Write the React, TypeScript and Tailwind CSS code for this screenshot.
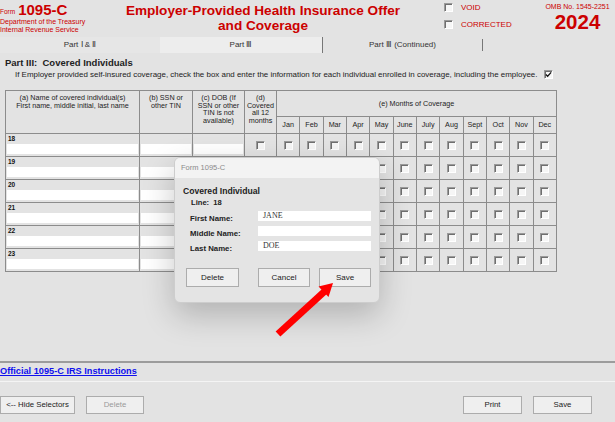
import React from "react";

const months = ["Jan", "Feb", "Mar", "Apr", "May", "June", "July", "Aug", "Sept", "Oct", "Nov", "Dec"];
const lines = [18, 19, 20, 21, 22, 23];

function Box({ checked }: { checked?: boolean }) {
  return (
    <span className="relative inline-flex items-center justify-center w-[9px] h-[9px] border border-t-[#9a9a9a] border-l-[#9a9a9a] border-b-white border-r-white bg-[#f6f6f6] shadow-[inset_1px_1px_0_#6f6f6f]">
      {checked && (
        <svg viewBox="0 0 8 8" className="w-[7px] h-[7px]">
          <path d="M1 4 L3 6 L7 1.5" fill="none" stroke="#111" strokeWidth="1.4" />
        </svg>
      )}
    </span>
  );
}

function Btn({ children, className = "", disabled }: { children: React.ReactNode; className?: string; disabled?: boolean }) {
  return (
    <button
      className={
        "h-[18px] bg-[#efefef] border border-[#acacac] text-[7.8px] leading-none flex items-center justify-center " +
        (disabled ? "text-[#9a9a9a] " : "text-[#222] ") +
        className
      }
    >
      {children}
    </button>
  );
}

export default function App() {
  const cell = "border-r border-b border-[#8c8c8c]";
  return (
    <div className="relative w-[615px] h-[422px] overflow-hidden bg-[#e3e3e3] font-['Liberation_Sans',Arial,sans-serif] text-[#222]">
      {/* Header */}
      <div className="flex h-[37px]">
        <div className="w-[110px] text-[#cc0000]">
          <div className="flex items-end h-[17px] leading-[15px]">
            <span className="text-[6.5px] leading-[10px] mr-[3px]">Form</span>
            <span className="text-[15px] font-bold">1095-C</span>
          </div>
          <div className="text-[7px] leading-[8px] pt-[1px]">Department of the Treasury</div>
          <div className="text-[7px] leading-[8px]">Internal Revenue Service</div>
        </div>
        <div className="w-[306px] pt-[3px] text-center text-[#cc0000] text-[13.6px] font-bold leading-[15px]">
          <div>Employer-Provided Health Insurance Offer</div>
          <div>and Coverage</div>
        </div>
        <div className="w-[124px] pl-[28px] pt-[3px] text-[#cc0000] text-[8px]">
          <div className="flex items-center gap-[8px] h-[9px]">
            <Box />
            <span>VOID</span>
          </div>
          <div className="flex items-center gap-[8px] h-[9px] mt-[8px]">
            <Box />
            <span>CORRECTED</span>
          </div>
        </div>
        <div className="w-[75px] text-center text-[#cc0000]">
          <div className="text-[7px] leading-[8px] pt-[3px]">OMB No. 1545-2251</div>
          <div className="text-[20.5px] font-bold leading-[22px]">2024</div>
        </div>
      </div>

      {/* Tabs */}
      <div className="flex h-[16px] text-[8px] text-[#333]">
        <div className="w-[160px] flex items-center justify-center bg-[#e6e6e6]">Part Ⅰ &amp; Ⅱ</div>
        <div className="w-[163px] flex items-center justify-center bg-[#ededed] border-r border-[#777]">Part Ⅲ</div>
        <div className="w-[160px] flex items-center justify-center border-r border-[#777] my-[2px]">Part Ⅲ (Continued)</div>
      </div>

      {/* Part III panel */}
      <div className="h-[310px] border-b-2 border-[#9c9c9c] flex flex-col">
        <div className="pl-[5px] pt-[3px] text-[9.5px] font-bold leading-[13px]">Part III:&nbsp; Covered Individuals</div>
        <div className="pl-[15px] h-[11px] flex items-center text-[7.95px]">
          <span>
            If Employer provided self-insured coverage, check the box and enter the information for each individual
            enrolled in coverage, including the employee.
          </span>
          <span className="ml-[7px] flex">
            <Box checked />
          </span>
        </div>

        <div className="ml-[5px] mt-[10px] w-[552px] border-t border-l border-[#8c8c8c] grid grid-cols-[134px_53px_52px_32px_repeat(12,minmax(0,1fr))] grid-rows-[26px_17px_repeat(6,23px)] text-[7.2px] leading-[8px]">
          <div className={cell + " row-span-2 text-center pt-[3px]"}>
            (a) Name of covered individual(s)
            <br />
            First name, middle initial, last name
          </div>
          <div className={cell + " row-span-2 text-center pt-[3px]"}>
            (b) SSN or
            <br />
            other TIN
          </div>
          <div className={cell + " row-span-2 text-center pt-[3px] leading-[7.5px]"}>
            (c) DOB (If
            <br />
            SSN or other
            <br />
            TIN is not
            <br />
            available)
          </div>
          <div className={cell + " row-span-2 text-center pt-[3px] leading-[7.5px]"}>
            (d)
            <br />
            Covered
            <br />
            all 12
            <br />
            months
          </div>
          <div className={cell + " col-span-12 flex items-center justify-center"}>(e) Months of Coverage</div>
          {months.map((m) => (
            <div key={m} className={cell + " flex items-center justify-center"}>
              {m}
            </div>
          ))}

          {lines.map((n) => (
            <React.Fragment key={n}>
              <div className={cell + " flex flex-col px-[1px]"}>
                <span className="h-[10px] text-[6.5px] font-bold leading-[9px] pl-[1px] text-[#111]">{n}</span>
                <div className="h-[10px] bg-white" />
              </div>
              <div className={cell + " flex flex-col justify-end pb-[2px] px-[1px]"}>
                <div className="h-[10px] bg-white" />
              </div>
              <div className={cell + " flex flex-col justify-end pb-[2px] px-[1px]"}>
                <div className="h-[10px] bg-white" />
              </div>
              <div className={cell + " flex items-center justify-center"}>
                <Box />
              </div>
              {months.map((m) => (
                <div key={m} className={cell + " flex items-center justify-center"}>
                  <Box />
                </div>
              ))}
            </React.Fragment>
          ))}
        </div>
      </div>

      {/* Link */}
      <div className="h-[19px] border-b border-[#f4f4f4] flex items-center">
        <a className="text-[9.2px] font-bold text-[#1010ee] underline">Official 1095-C IRS Instructions</a>
      </div>

      {/* Bottom buttons */}
      <div className="flex mt-[14px]">
        <Btn className="w-[75px]">&lt;-- Hide Selectors</Btn>
        <Btn className="w-[58px] ml-[11px]" disabled>
          Delete
        </Btn>
        <Btn className="w-[59px] ml-[319px]">Print</Btn>
        <Btn className="w-[59px] ml-[11px]">Save</Btn>
      </div>

      {/* Dialog */}
      <div className="absolute left-[174px] top-[157px] w-[206px] h-[146px] rounded-[6px] bg-[#e4e4e4] border border-[#cdcdcd] shadow-[0_12px_32px_rgba(0,0,0,0.22)] overflow-hidden flex flex-col">
        <div className="h-[20px] bg-[#f3f3f3] px-[6px] flex items-center text-[7.5px] text-[#8a8a8a]">Form 1095-C</div>
        <div className="px-[8px] pt-[8px]">
          <div className="text-[8.6px] font-bold leading-[11px]">Covered Individual</div>
          <div className="pl-[8px] text-[7.6px] font-bold leading-[11px]">Line:&nbsp; 18</div>
          <div className="mt-[3px] flex flex-col gap-[5px]">
            {[
              ["First Name:", "JANE"],
              ["Middle Name:", ""],
              ["Last Name:", "DOE"],
            ].map(([label, value]) => (
              <div key={label} className="flex h-[10px] items-start">
                <span className="w-[75px] pl-[7px] text-[7.8px] font-bold leading-[15px]">{label}</span>
                <div className="w-[113px] h-[10px] bg-white pl-[5px] text-[8px] leading-[10px] font-['Liberation_Serif',serif] text-[#333]">
                  {value}
                </div>
              </div>
            ))}
          </div>
          <div className="flex mt-[17px]">
            <Btn className="w-[53px] h-[19px] ml-[3px] text-[8px]">Delete</Btn>
            <Btn className="w-[52px] h-[19px] ml-[19px] text-[8px]">Cancel</Btn>
            <Btn className="w-[52px] h-[19px] ml-[9px] text-[8px] border-[#8a8a8a]">Save</Btn>
          </div>
        </div>
      </div>

      {/* Red arrow */}
      <svg className="absolute left-0 top-0 pointer-events-none" width="615" height="422">
        <line x1="278" y1="334" x2="325" y2="291" stroke="#ff0000" strokeWidth="7" />
        <polygon points="333,283 328.5,297 318.5,286.5" fill="#ff0000" />
      </svg>
    </div>
  );
}
